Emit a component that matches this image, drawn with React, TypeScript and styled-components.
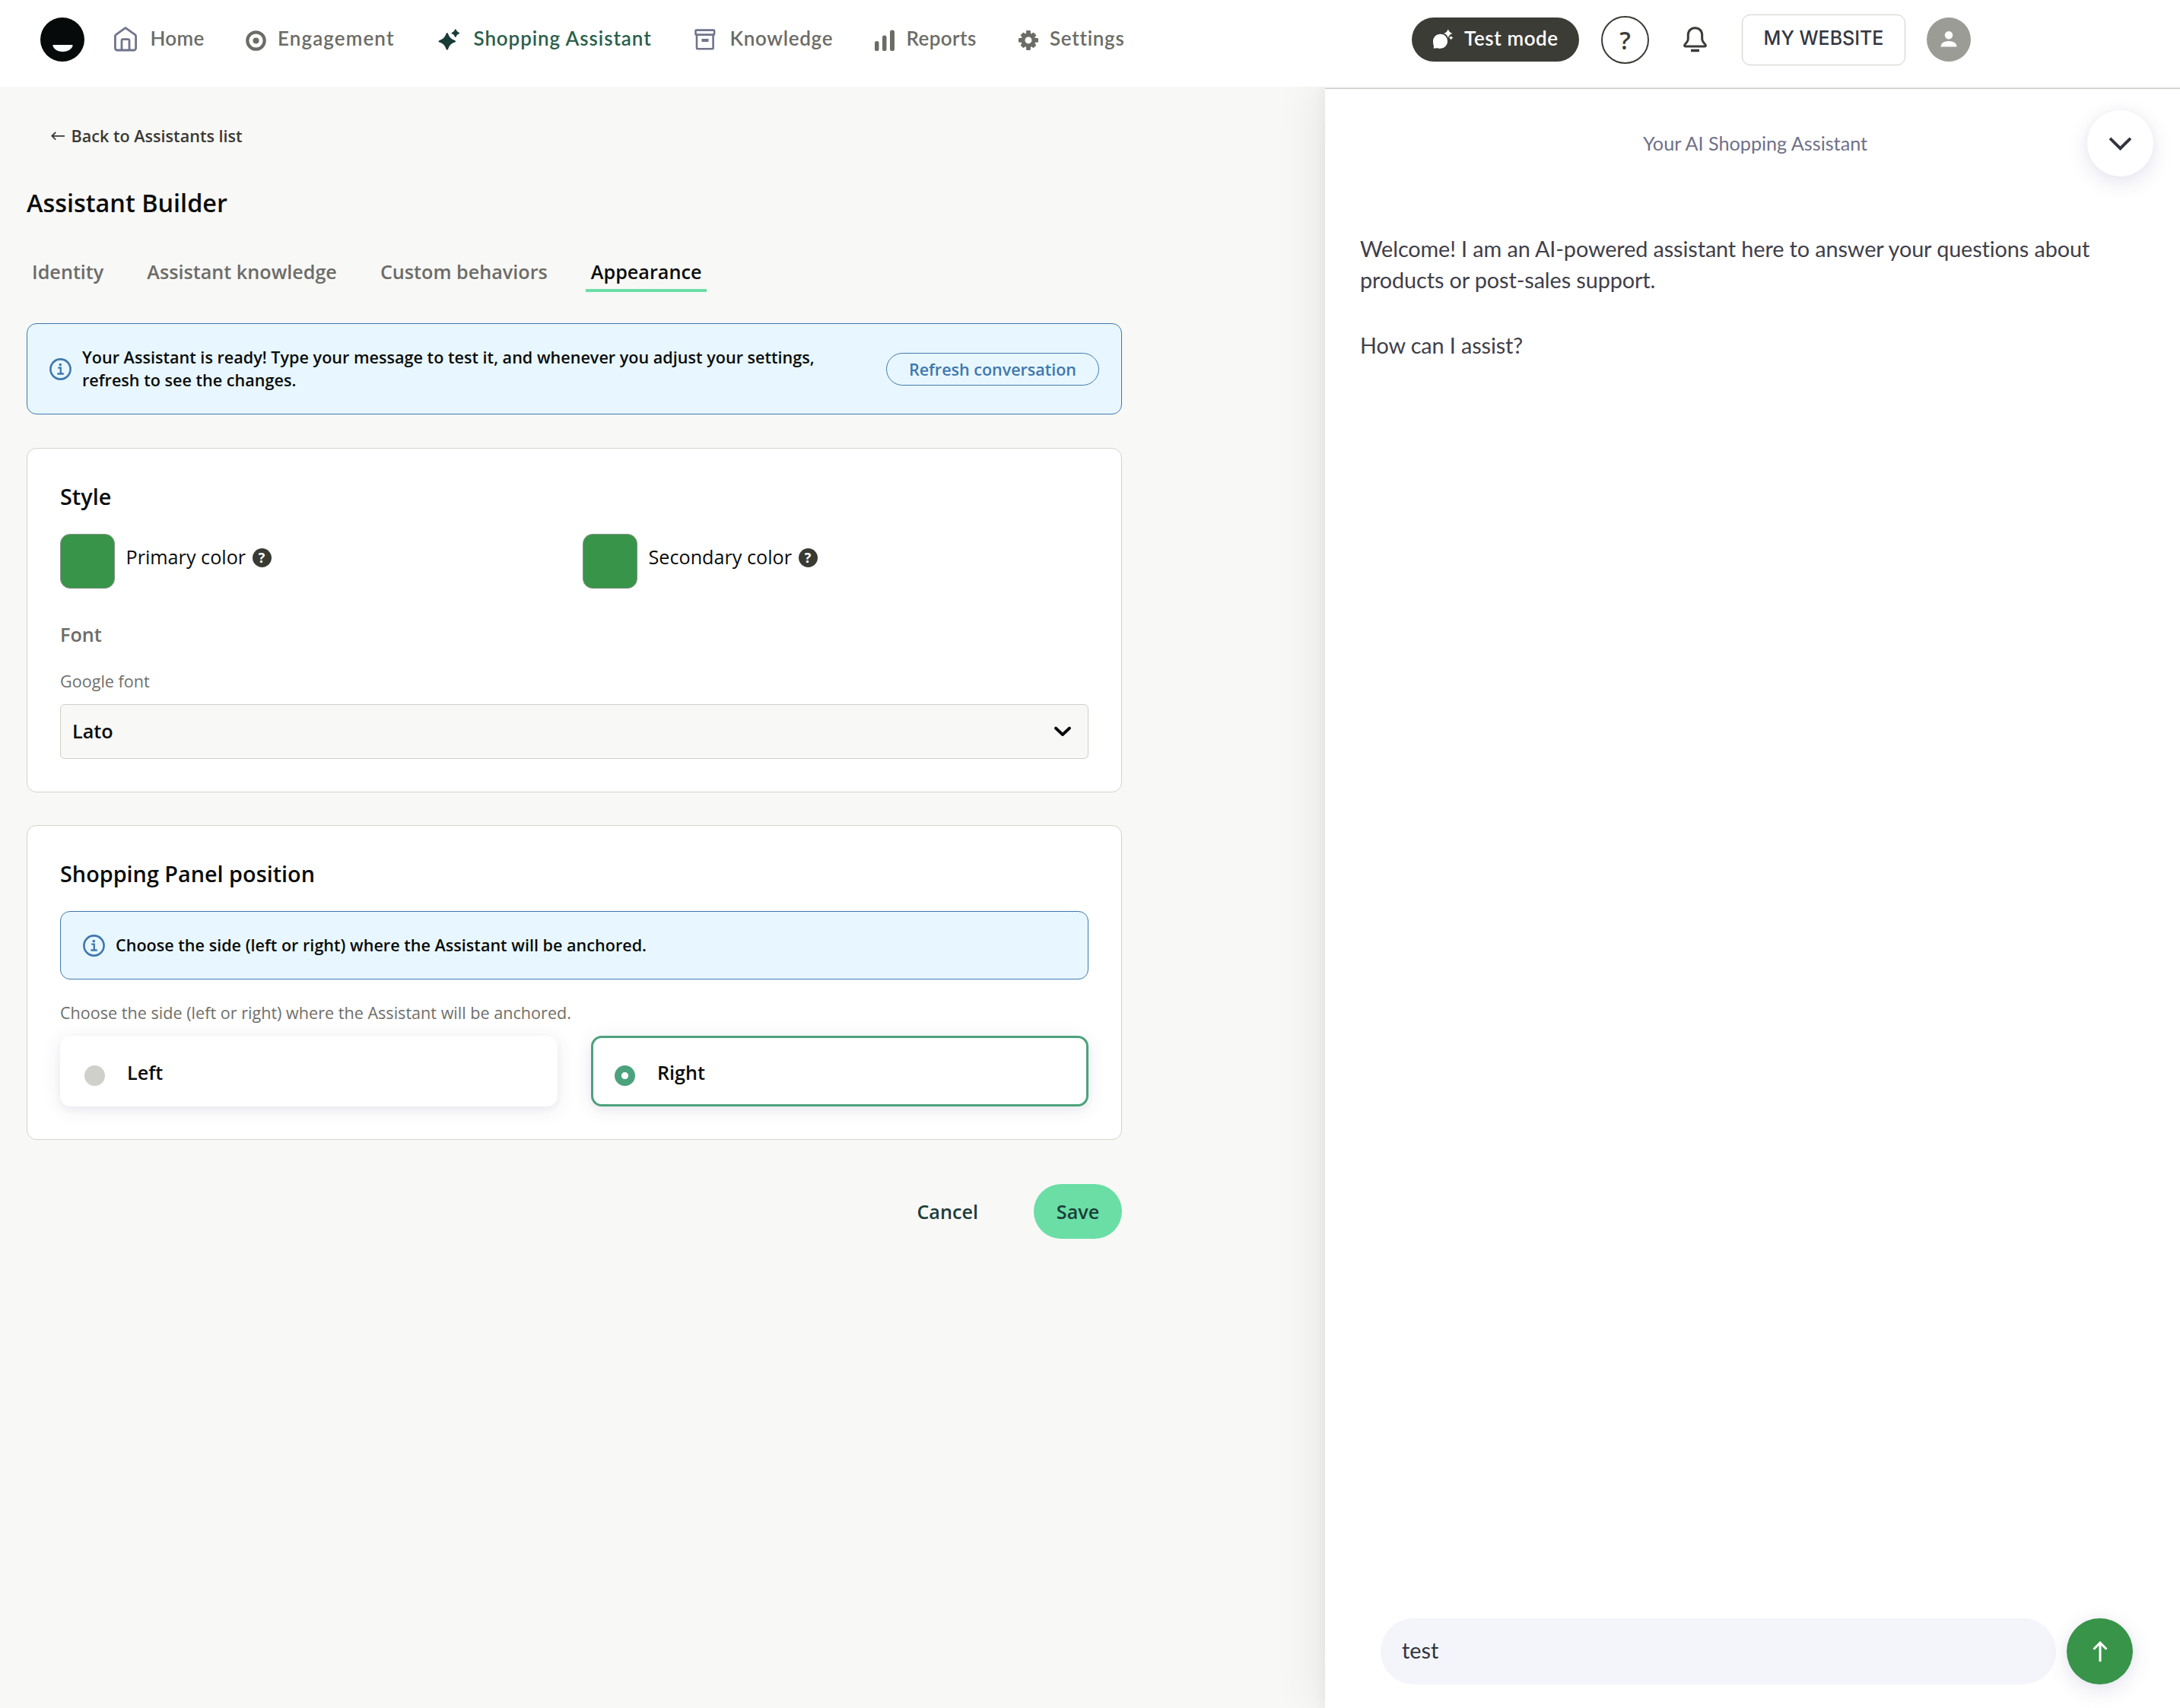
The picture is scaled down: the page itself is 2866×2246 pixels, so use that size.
import styled, { createGlobalStyle, css } from "styled-components";

const openSans = `"Open Sans", "Noto Sans", sans-serif`;
const lato = `Lato, "Noto Sans", sans-serif`;
const navFont = `Lato, Roboto, sans-serif`;

const GlobalStyle = createGlobalStyle`
  *, *::before, *::after { box-sizing: border-box; }
  body { margin: 0; background: #f8f8f6; font-family: ${openSans}; color: #0a0c0c; overflow: hidden; }
  h1, h2, h3, p { margin: 0; }
  button { font: inherit; color: inherit; background: none; border: 0; padding: 0; cursor: pointer; }
  svg { display: block; flex: none; }
`;

const Page = styled.div`
  width: 2866px;
  height: 2246px;
  display: flex;
  flex-direction: column;
`;

/* ---------- Top bar ---------- */

const TopBar = styled.header`
  height: 114px;
  flex: none;
  display: flex;
  align-items: flex-start;
  padding: 0 275px 0 53px;
  background: #fff;
  font-family: ${navFont};
`;

const LogoSlot = styled.div`
  width: 96px;
  padding-top: 23px;
`;

const Nav = styled.nav`
  display: flex;
`;

const NavItem = styled.a<{ $width: number; $active?: boolean }>`
  width: ${(p) => p.$width}px;
  height: 104px;
  display: flex;
  align-items: center;
  color: ${(p) => (p.$active ? "#2a5f4b" : "#6c6c66")};
  font-size: 26px;
  font-weight: 600;
  white-space: nowrap;
`;

const NavIcon = styled.span<{ $width: number }>`
  width: ${(p) => p.$width}px;
  height: 34px;
  flex: none;
`;

const NavText = styled.span<{ $spacing?: number }>`
  line-height: 34px;
  margin-top: -4px;
  letter-spacing: ${(p) => p.$spacing ?? 0}px;
`;

const TopActions = styled.div`
  height: 104px;
  margin-left: auto;
  display: flex;
  align-items: center;
`;

const TestMode = styled.button`
  width: 220px;
  height: 58px;
  border-radius: 29px;
  background: #3c3c36;
  color: #fff;
  display: flex;
  align-items: center;
  padding-left: 28px;
  font-size: 26px;
  font-weight: 600;
  white-space: nowrap;
`;

const TestModeIcon = styled.span`
  width: 41px;
  height: 28px;
  flex: none;
`;

const HelpButton = styled.button`
  width: 63px;
  height: 63px;
  margin: 1px 45px 0 29px;
  border: 2px solid #3c3c36;
  border-radius: 50%;
  color: #3c3c36;
  font: 600 32px/58px ${openSans};
`;

const SiteButton = styled.button`
  width: 215px;
  height: 67px;
  margin: 1px 28px 0 46px;
  padding-bottom: 5px;
  border: 1px solid #cfd0c9;
  border-radius: 11px;
  color: #343741;
  font: 500 25px/30px Inter, sans-serif;
  white-space: nowrap;
`;

const Avatar = styled.div`
  width: 58px;
  height: 58px;
  border-radius: 50%;
  background: #9b9c95;
  display: grid;
  place-items: center;
`;

/* ---------- Builder column ---------- */

const Body = styled.div`
  flex: 1;
  display: flex;
  overflow: hidden;
`;

const Builder = styled.main`
  width: 1742px;
  flex: none;
  padding: 49px 267px 0 35px;
  display: flex;
  flex-direction: column;
`;

const BackLink = styled.a`
  display: flex;
  align-items: center;
  gap: 8.5px;
  margin-left: 32px;
  color: #3a3a35;
  font-size: 21.6px;
  font-weight: 600;
  line-height: 31px;
`;

const Title = styled.h1`
  margin-top: 50px;
  font-size: 32.4px;
  font-weight: 600;
  line-height: 44px;
`;

const Tabs = styled.div`
  display: flex;
  gap: 43px;
  margin-top: 51px;
`;

const Tab = styled.button<{ $active?: boolean }>`
  padding: 0 7px 5px;
  border-bottom: 4px solid ${(p) => (p.$active ? "#6adea5" : "transparent")};
  color: ${(p) => (p.$active ? "#0a0c0c" : "#6c6c68")};
  font-size: 25.2px;
  font-weight: 600;
  line-height: 36px;
  white-space: nowrap;
`;

const Notice = styled.div<{ $height: number }>`
  height: ${(p) => p.$height}px;
  display: flex;
  align-items: center;
  gap: 14px;
  padding: 0 29px;
  border: 1px solid #3f78ae;
  border-radius: 13px;
  background: #e8f7ff;
  font-size: 21.6px;
  font-weight: 600;
  line-height: 30px;
`;

const TopNotice = styled(Notice)`
  margin-top: 41px;
`;

const CardNotice = styled(Notice)`
  margin-top: 30px;
`;

const RefreshButton = styled.button`
  width: 280px;
  height: 43px;
  margin-left: auto;
  border: 1px solid #3f78ae;
  border-radius: 22px;
  color: #3f78ae;
  line-height: 41px;
  letter-spacing: -0.05px;
  white-space: nowrap;
`;

const Card = styled.section<{ $height: number; $gap: number }>`
  height: ${(p) => p.$height}px;
  margin-top: ${(p) => p.$gap}px;
  padding: 44px 43px 0;
  border: 1px solid #d3d4cd;
  border-radius: 13px;
  background: #fff;
`;

const CardTitle = styled.h2`
  font-size: 28.8px;
  font-weight: 600;
  line-height: 38px;
`;

const ColorRow = styled.div`
  display: grid;
  grid-template-columns: 687px 1fr;
  margin-top: 30px;
`;

const ColorField = styled.div`
  display: flex;
  align-items: center;
`;

const Swatch = styled.button<{ $color: string }>`
  width: 72px;
  height: 72px;
  border: 1px solid #86928a;
  border-radius: 13px;
  background: ${(p) => p.$color};
`;

const ColorLabel = styled.span`
  margin: 0 8.5px 12px 14.5px;
  font-size: 25.2px;
  line-height: 36px;
`;

const HelpDot = styled.span`
  width: 25px;
  height: 25px;
  margin-bottom: 9px;
  border-radius: 50%;
  background: #3a3a35;
  color: #fff;
  font-size: 18px;
  font-weight: 700;
  line-height: 25px;
  text-align: center;
`;

const SubTitle = styled.h3`
  margin-top: 42px;
  color: #6c6c68;
  font-size: 25.2px;
  font-weight: 600;
  line-height: 36px;
`;

const Hint = styled.p<{ $gap: number }>`
  margin-top: ${(p) => p.$gap}px;
  color: #6f6f6a;
  font-size: 21.6px;
  line-height: 30px;
`;

const Select = styled.button`
  width: 100%;
  height: 72px;
  margin-top: 15px;
  padding: 0 20px 0 15px;
  display: flex;
  align-items: center;
  justify-content: space-between;
  border: 1px solid #cfd0c8;
  border-radius: 6px;
  background: #f8f8f6;
  font-size: 25.2px;
  font-weight: 600;
  line-height: 34px;
`;

const SelectValue = styled.span`
  margin-bottom: 2px;
`;

const Options = styled.div`
  display: grid;
  grid-template-columns: 1fr 1fr;
  gap: 44px;
  margin-top: 15px;
`;

const Option = styled.label<{ $selected?: boolean }>`
  height: 93px;
  display: flex;
  align-items: center;
  padding-left: ${(p) => (p.$selected ? 28 : 32)}px;
  border-radius: 14px;
  background: #fff;
  box-shadow: 0 4px 24px rgba(60, 60, 130, 0.1), 0 4px 8px rgba(60, 60, 110, 0.04);
  font-size: 25.2px;
  font-weight: 600;
  ${(p) =>
    p.$selected &&
    css`
      border: 3px solid #4ca27c;
    `}
`;

const Radio = styled.span<{ $selected?: boolean }>`
  width: 27px;
  height: 27px;
  margin: 12px 29px 0 0;
  border-radius: 50%;
  background: ${(p) =>
    p.$selected ? "radial-gradient(circle, #fff 4.2px, #4ca27c 5px)" : "#cfd0c9"};
`;

const OptionText = styled.span`
  line-height: 36px;
  margin-top: 3px;
`;

const Actions = styled.div`
  display: flex;
  justify-content: flex-end;
  gap: 73px;
  margin-top: 58px;
  color: #1b3d3a;
  font-size: 25.2px;
  font-weight: 600;
  line-height: 34px;
`;

const Cancel = styled.button`
  height: 72px;
  padding-bottom: 1px;
`;

const Save = styled.button`
  width: 116px;
  height: 72px;
  padding-bottom: 1px;
  border-radius: 36px;
  background: #6adea5;
`;

/* ---------- Assistant preview ---------- */

const Preview = styled.aside`
  width: 1124px;
  display: flex;
  flex-direction: column;
  border-top: 2px solid #eeeeec;
  background: #fff;
  box-shadow: 0 0 64px rgba(26, 50, 47, 0.1), 0 0 16px rgba(26, 57, 60, 0.06);
  font-family: ${lato};
  font-variant-ligatures: none;
`;

const PreviewHead = styled.div`
  display: flex;
  align-items: center;
  padding: 28px 35px 0 0;
  border-top: 1px solid #c8c9c1;
`;

const PreviewTitle = styled.div`
  flex: 1;
  padding: 0 0 2px 129px;
  color: #6f7188;
  font-size: 25.2px;
  text-align: center;
`;

const RoundButton = styled.button<{ $bg: string }>`
  width: 87px;
  height: 87px;
  flex: none;
  display: grid;
  place-items: center;
  border-radius: 50%;
  background: ${(p) => p.$bg};
  box-shadow: 0 8px 28px rgba(60, 60, 130, 0.12), 0 0 12px rgba(60, 60, 130, 0.04);
`;

const Messages = styled.div`
  flex: 1;
  padding: 75px 46px 0;
  color: #3f4049;
  font-size: 28.8px;
  letter-spacing: -0.1px;
  line-height: 41px;
`;

const Message = styled.p`
  white-space: pre-line;
  & + & {
    margin-top: 45px;
  }
`;

const Composer = styled.div`
  display: flex;
  gap: 14px;
  padding: 0 62px 31px 73px;
`;

const ComposerInput = styled.div`
  width: 888px;
  height: 87px;
  padding: 0 28px;
  border-radius: 44px;
  background: #f4f5fa;
  color: #32343e;
  font-size: 28.8px;
  line-height: 84px;
`;

/* ---------- Drawings ---------- */

const Logo = () => (
  <svg width="58" height="58" viewBox="0 0 58 58">
    <circle cx="29" cy="29" r="29" fill="#070a0a" />
    <path d="M17.500 36h24c1 0 1.300.6 1 1.500C41 42 35.800 45 29.500 45S18 42 16.500 37.500c-.3-.9 0-1.500 1-1.500z" fill="#fff" />
  </svg>
);

const HomeIcon = () => (
  <svg width="32" height="34" viewBox="0 0 32 34" fill="none" stroke="#70758c" strokeWidth="2.800" strokeLinejoin="round">
    <path d="M2.400 12.600c0-.9.4-1.500 1-2L16 1.700l12.600 8.900c.6.500 1 1.100 1 2V28.300a2.700 2.700 0 0 1-2.700 2.700H5.100a2.700 2.700 0 0 1-2.700-2.700z" />
    <path d="M11 31V18.200a1.600 1.600 0 0 1 1.600-1.600h6.800a1.600 1.600 0 0 1 1.600 1.600V31" />
  </svg>
);

const TargetIcon = () => (
  <svg width="27" height="34" viewBox="0 0 27 34">
    <circle cx="13.500" cy="18.500" r="11.200" fill="none" stroke="#6c6c66" strokeWidth="4.200" />
    <circle cx="13.500" cy="18.500" r="4" fill="#6c6c66" />
  </svg>
);

const star = (x: number, y: number, r: number) => {
  const k = r * 0.225;
  return `M${x} ${y - r}Q${x + k} ${y - k} ${x + r} ${y}Q${x + k} ${y + k} ${x} ${y + r}Q${x - k} ${y + k} ${x - r} ${y}Q${x - k} ${y - k} ${x} ${y - r}z`;
};

const SparkleIcon = () => (
  <svg width="30" height="34" viewBox="0 0 30 34" fill="#1a3b38" stroke="#1a3b38" strokeLinejoin="round">
    <path d={star(11.8, 19.4, 10)} strokeWidth="2.400" />
    <path d={star(22.8, 8.6, 4.6)} strokeWidth="1.400" />
  </svg>
);

const ArchiveIcon = () => (
  <svg width="28" height="34" viewBox="0 0 28 34" fill="none" stroke="#70758c" strokeWidth="2.600" strokeLinejoin="round">
    <rect x="1.500" y="4.600" width="24.600" height="6.200" rx="1" />
    <path d="M3 10.800h21.600v17.400a1 1 0 0 1-1 1H4a1 1 0 0 1-1-1z" />
    <path d="M9.500 18h9" strokeWidth="4" />
  </svg>
);

const BarsIcon = () => (
  <svg width="26" height="34" viewBox="0 0 26 34" fill="#6c6c66">
    <rect x="0" y="19" width="5.500" height="13" rx="2.600" />
    <rect x="10" y="11.500" width="5.500" height="20.500" rx="2.600" />
    <rect x="20" y="4.600" width="6" height="27.400" rx="2.800" />
  </svg>
);

const GearIcon = () => (
  <svg width="26" height="34" viewBox="0 0 26 34">
    <g transform="translate(13 17.900)">
      {[0, 45, 90, 135].map((a) => (
        <rect
          key={a}
          x="-2.900"
          y={a % 90 ? -12 : -13}
          width="5.800"
          height={a % 90 ? 24 : 26}
          rx="1.200"
          fill="#6c6c66"
          transform={`rotate(${a})`}
        />
      ))}
      <circle r="7" fill="#fff" stroke="#6c6c66" strokeWidth="5" />
    </g>
  </svg>
);

const ChatSparkleIcon = () => (
  <svg width="27" height="28" viewBox="0 0 27 28" fill="#fff">
    <path d="M0 16.500C0 10.800 4.200 6.800 9.700 6.800S19 11 19 16.300 14.800 25.800 9.400 25.800c-1.600 0-3-.3-4.300-.9-.9.400-2.300.6-3.900.5-.7 0-.9-.5-.5-1 .5-.7.4-1.500.1-2.200C.2 20.500 0 18.500 0 16.500z" />
    <path d={star(19.8, 6, 5.8)} stroke="#3c3c36" strokeWidth="1" paintOrder="stroke" />
    <path d={star(23.6, 11.8, 2.8)} />
  </svg>
);

const BellIcon = () => (
  <svg width="31" height="34" viewBox="0 0 31 34">
    <path d="M15.500 1.800c-5.400 0-9.200 3.900-9.200 9.200v5c0 2.300-.7 3.700-2.200 5.300-1.100 1.200-2.500 2.300-2.500 3.500 0 .8.600 1.200 1.400 1.200h25c.8 0 1.400-.4 1.400-1.200 0-1.200-1.400-2.300-2.500-3.500-1.500-1.600-2.200-3-2.200-5.300v-5c0-5.300-3.800-9.200-9.200-9.200z" fill="none" stroke="#3c3c36" strokeWidth="3" strokeLinejoin="round" />
    <path d="M10 29.700h11v3.500H10z" fill="#3c3c36" />
  </svg>
);

const PersonIcon = () => (
  <svg width="22" height="22" viewBox="0 0 22 22" fill="#fff">
    <circle cx="11" cy="5.200" r="5.200" />
    <path d="M.5 20.500c0-4.600 4.300-7.500 10.500-7.500s10.500 2.900 10.500 7.500z" />
  </svg>
);

const ArrowLeftIcon = () => (
  <svg width="18" height="12" viewBox="0 0 18 12" fill="none" stroke="#3a3a35" strokeWidth="1.800">
    <path d="M6.200 1 1.300 5.800l4.900 4.800M1.300 5.800H18" />
  </svg>
);

const InfoIcon = () => (
  <svg width="29" height="29" viewBox="0 0 29 29" fill="none" stroke="#3f78ae">
    <circle cx="14.500" cy="14.500" r="13.100" strokeWidth="2.600" />
    <path d="M11.200 12.600h3.600v7.600M10.400 20.500h8.400" strokeWidth="2.300" />
    <circle cx="14.300" cy="8.600" r="1.800" fill="#3f78ae" stroke="none" />
  </svg>
);

const SelectChevron = () => (
  <svg width="26" height="14" viewBox="0 0 26 14" fill="none" stroke="#0a0c0c" strokeWidth="3.800" strokeLinecap="round" strokeLinejoin="round">
    <path d="M4 2.500 13 11l9-8.500" />
  </svg>
);

const CollapseChevron = () => (
  <svg width="31" height="18" viewBox="0 0 31 18" fill="none" stroke="#32343e" strokeWidth="3.800">
    <path d="m2 1.800 13.500 13.400L29 1.800" />
  </svg>
);

const ArrowUpIcon = () => (
  <svg width="20" height="28" viewBox="0 0 20 28" fill="none" stroke="#fff" strokeWidth="3">
    <path d="M10 27V3M1.500 10.700 10 2.200l8.500 8.500" />
  </svg>
);

/* ---------- Page ---------- */

const navItems = [
  { label: "Home", icon: <HomeIcon />, width: 174, iconWidth: 48.5, spacing: 0.3 },
  { label: "Engagement", icon: <TargetIcon />, width: 253, iconWidth: 42, spacing: 1.1 },
  { label: "Shopping Assistant", icon: <SparkleIcon />, width: 337, iconWidth: 46.5, spacing: 0.9, active: true },
  { label: "Knowledge", icon: <ArchiveIcon />, width: 237, iconWidth: 46.5, spacing: 0.7 },
  { label: "Reports", icon: <BarsIcon />, width: 189, iconWidth: 41.5, spacing: 0.4 },
  { label: "Settings", icon: <GearIcon />, width: 145, iconWidth: 41, spacing: 0.7 },
];

const tabs = ["Identity", "Assistant knowledge", "Custom behaviors", "Appearance"];

export default function App() {
  return (
    <Page>
      <GlobalStyle />
      <TopBar>
        <LogoSlot>
          <Logo />
        </LogoSlot>
        <Nav>
          {navItems.map((item) => (
            <NavItem key={item.label} $width={item.width} $active={item.active}>
              <NavIcon $width={item.iconWidth}>{item.icon}</NavIcon>
              <NavText $spacing={item.spacing}>{item.label}</NavText>
            </NavItem>
          ))}
        </Nav>
        <TopActions>
          <TestMode>
            <TestModeIcon>
              <ChatSparkleIcon />
            </TestModeIcon>
            <NavText $spacing={0.6}>Test mode</NavText>
          </TestMode>
          <HelpButton>?</HelpButton>
          <BellIcon />
          <SiteButton>MY WEBSITE</SiteButton>
          <Avatar>
            <PersonIcon />
          </Avatar>
        </TopActions>
      </TopBar>

      <Body>
        <Builder>
          <BackLink>
            <ArrowLeftIcon />
            <span>Back to Assistants list</span>
          </BackLink>
          <Title>Assistant Builder</Title>
          <Tabs>
            {tabs.map((tab) => (
              <Tab key={tab} $active={tab === "Appearance"}>
                {tab}
              </Tab>
            ))}
          </Tabs>

          <TopNotice $height={120}>
            <InfoIcon />
            <p>
              Your Assistant is ready! Type your message to test it, and whenever you adjust your settings,
              <br />
              refresh to see the changes.
            </p>
            <RefreshButton>Refresh conversation</RefreshButton>
          </TopNotice>

          <Card $height={453} $gap={44}>
            <CardTitle>Style</CardTitle>
            <ColorRow>
              <ColorField>
                <Swatch $color="#389448" />
                <ColorLabel>Primary color</ColorLabel>
                <HelpDot>?</HelpDot>
              </ColorField>
              <ColorField>
                <Swatch $color="#389448" />
                <ColorLabel>Secondary color</ColorLabel>
                <HelpDot>?</HelpDot>
              </ColorField>
            </ColorRow>
            <SubTitle>Font</SubTitle>
            <Hint $gap={29}>Google font</Hint>
            <Select>
              <SelectValue>Lato</SelectValue>
              <SelectChevron />
            </Select>
          </Card>

          <Card $height={414} $gap={43}>
            <CardTitle>Shopping Panel position</CardTitle>
            <CardNotice $height={90}>
              <InfoIcon />
              <p>Choose the side (left or right) where the Assistant will be anchored.</p>
            </CardNotice>
            <Hint $gap={29}>Choose the side (left or right) where the Assistant will be anchored.</Hint>
            <Options>
              <Option>
                <Radio />
                <OptionText>Left</OptionText>
              </Option>
              <Option $selected>
                <Radio $selected />
                <OptionText>Right</OptionText>
              </Option>
            </Options>
          </Card>

          <Actions>
            <Cancel>Cancel</Cancel>
            <Save>Save</Save>
          </Actions>
        </Builder>

        <Preview>
          <PreviewHead>
            <PreviewTitle>Your AI Shopping Assistant</PreviewTitle>
            <RoundButton $bg="#fff">
              <CollapseChevron />
            </RoundButton>
          </PreviewHead>
          <Messages>
            <Message>
              {"Welcome! I am an AI-powered assistant here to answer your questions about\nproducts or post-sales support."}
            </Message>
            <Message>How can I assist?</Message>
          </Messages>
          <Composer>
            <ComposerInput>test</ComposerInput>
            <RoundButton $bg="#389448">
              <ArrowUpIcon />
            </RoundButton>
          </Composer>
        </Preview>
      </Body>
    </Page>
  );
}
